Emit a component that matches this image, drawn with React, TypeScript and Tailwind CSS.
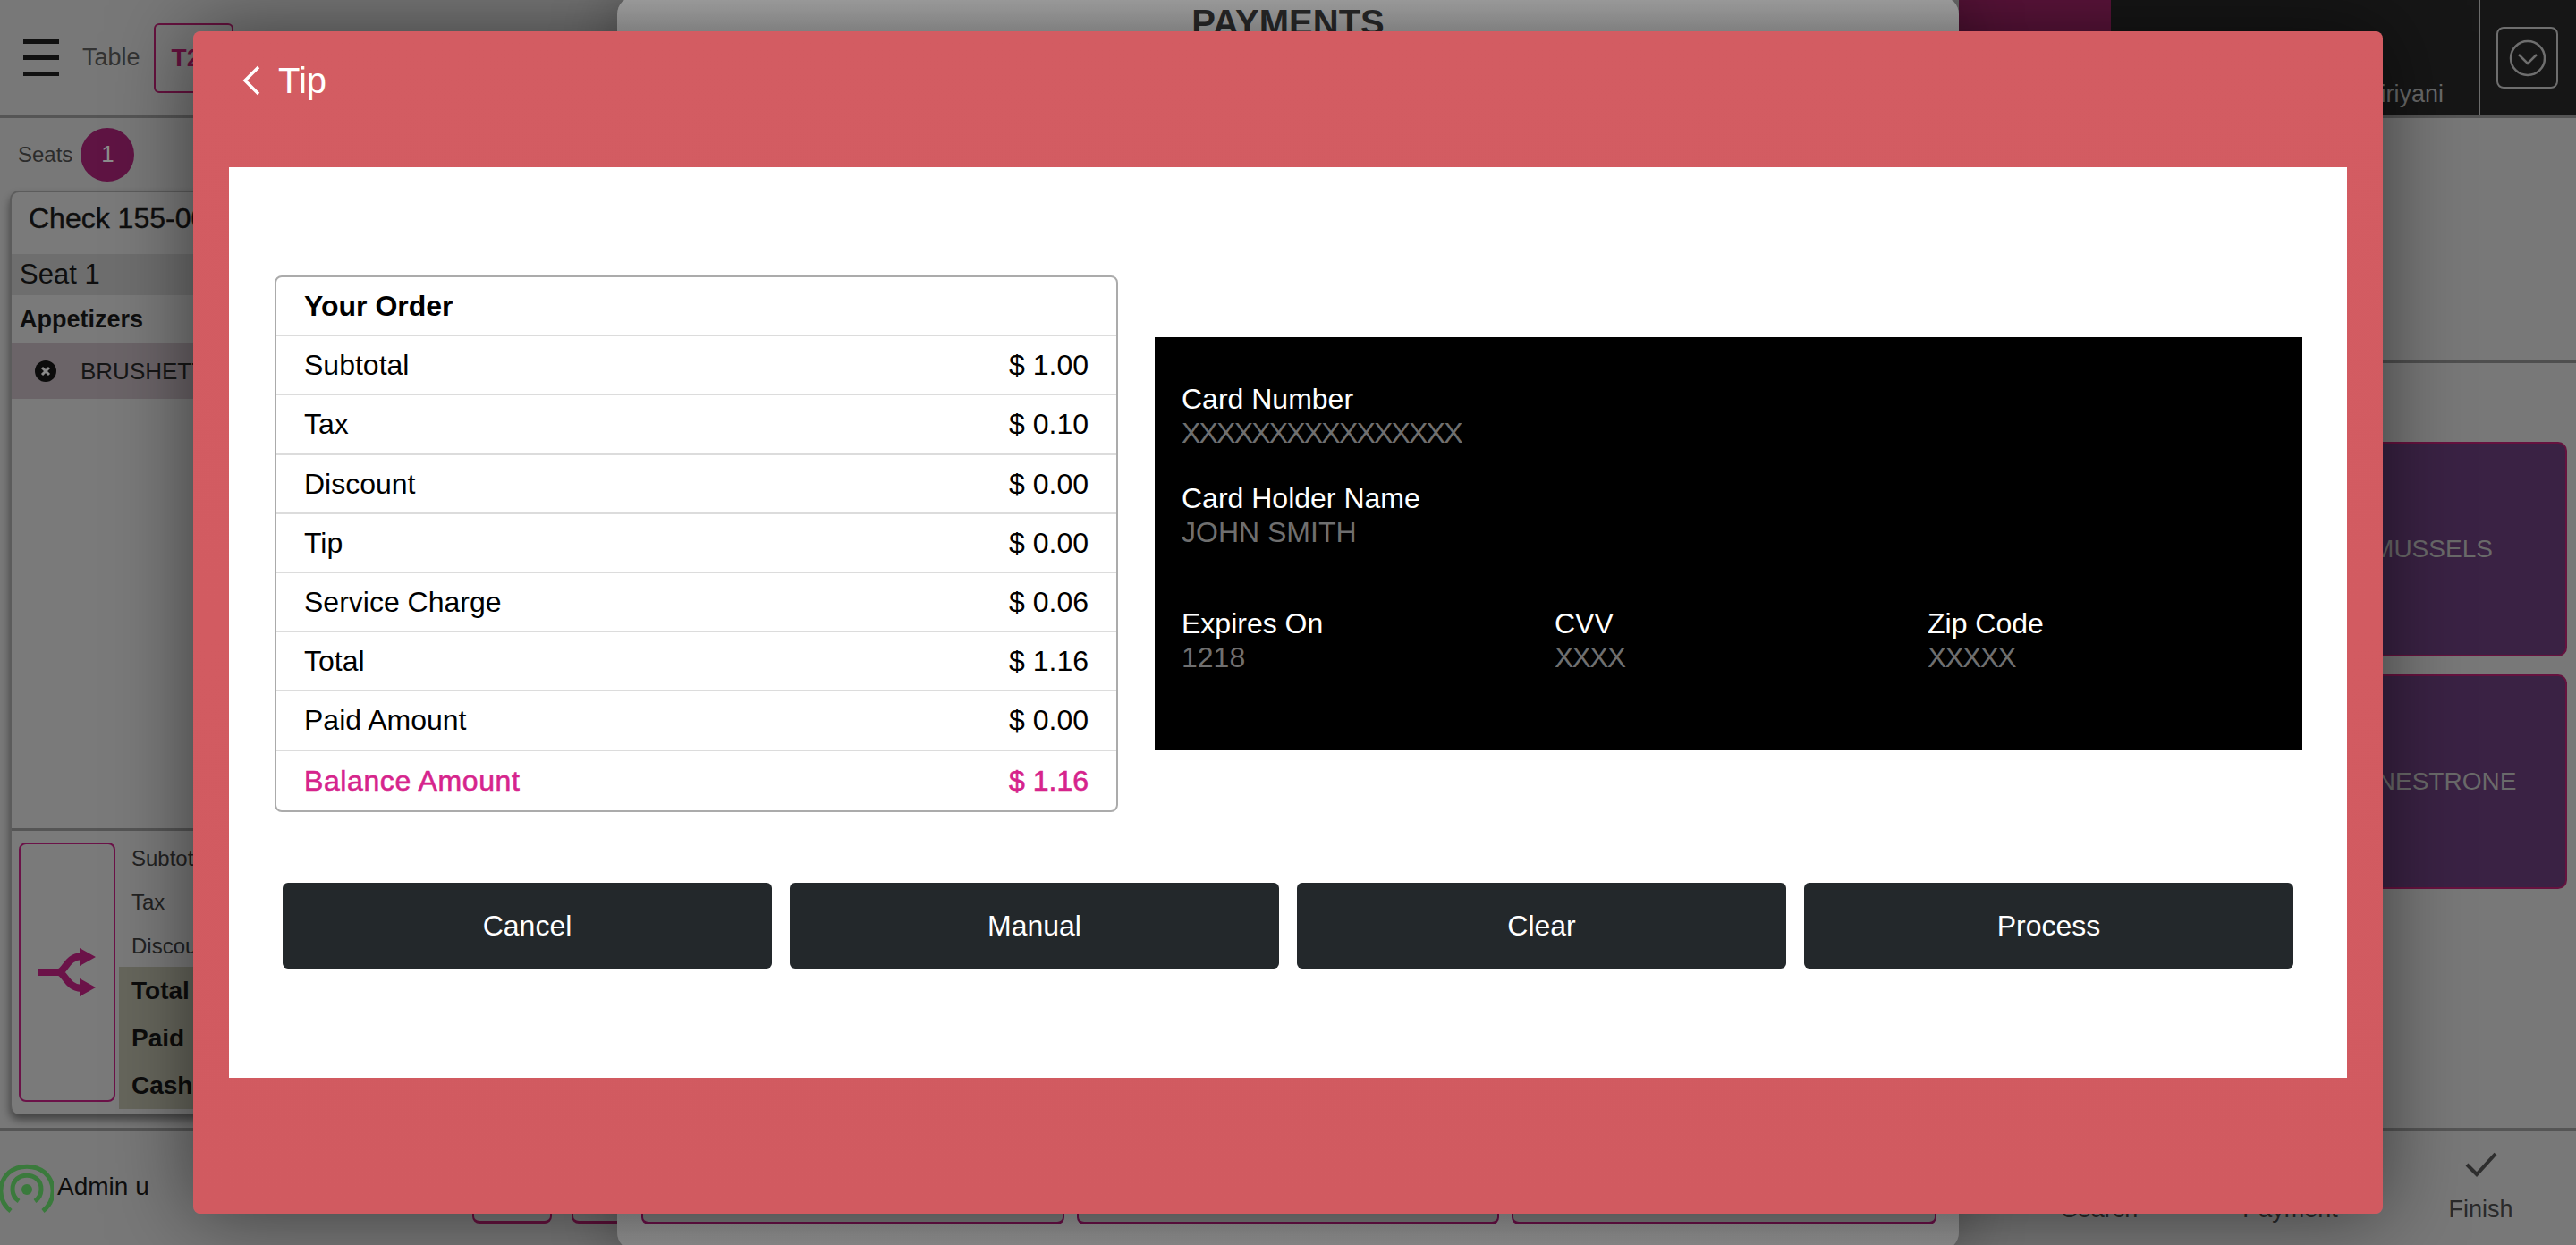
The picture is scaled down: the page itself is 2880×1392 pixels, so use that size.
import React from 'react';

const orderRows = [
  { label: 'Subtotal', value: '$ 1.00' },
  { label: 'Tax', value: '$ 0.10' },
  { label: 'Discount', value: '$ 0.00' },
  { label: 'Tip', value: '$ 0.00' },
  { label: 'Service Charge', value: '$ 0.06' },
  { label: 'Total', value: '$ 1.16' },
  { label: 'Paid Amount', value: '$ 0.00' },
];

const actions = ['Cancel', 'Manual', 'Clear', 'Process'];

const CardField: React.FC<{ label: string; value: string; tight?: boolean }> = ({ label, value, tight }) => (
  <div className="flex flex-col">
    <span className="h-[38px] leading-[38px] text-[32px] text-white">{label}</span>
    <span className={`h-[38px] leading-[38px] text-[32px] text-[#6f6f6f] ${tight ? 'tracking-[-1.8px]' : ''}`}>{value}</span>
  </div>
);

const Header: React.FC = () => (
  <header className="flex h-[132px] shrink-0 border-b-[3px] border-[#555555]">
    <div className="flex flex-1 items-center">
      <div className="ml-[26px] flex w-[40px] flex-col gap-[13px]">
        <span className="h-[5px] bg-[#111111]" />
        <span className="h-[5px] bg-[#111111]" />
        <span className="h-[5px] bg-[#111111]" />
      </div>
      <span className="ml-[26px] text-[27px] text-[#333333]">Table</span>
      <div className="ml-[15px] flex h-[78px] w-[89px] items-center rounded-[6px] border-2 border-[#66123f] pl-[18px] text-[28px] font-bold text-[#66123f]">
        T2
      </div>
    </div>
    <div className="w-[170px] bg-[#5c143b]" />
    <div className="flex w-[411px] items-end justify-end bg-[#161616] pb-[4px] pr-[39px] text-[27px] text-[#6a6a6a]">
      Biriyani
    </div>
    <div className="flex w-[109px] items-center border-l-2 border-[#6b6b6b] bg-[#161616] pl-[18px]">
      <div className="flex h-[69px] w-[69px] items-center justify-center rounded-[8px] border-2 border-[#6e6e6e]">
        <svg width="42" height="42" viewBox="0 0 42 42" fill="none" stroke="#6e6e6e" strokeWidth="2.5">
          <circle cx="21" cy="21" r="19" />
          <path d="M11 17l10 10 10-10" />
        </svg>
      </div>
    </div>
  </header>
);

const CheckPanel: React.FC = () => (
  <div className="flex w-[690px] shrink-0 flex-col">
    <div className="flex h-[81px] items-center pl-[20px]">
      <span className="text-[24px] text-[#2c2c2c]">Seats</span>
      <span className="ml-[9px] flex h-[60px] w-[60px] items-center justify-center rounded-full bg-[#5f1443] text-[26px] text-[#8c8c8c]">
        1
      </span>
    </div>
    <div className="ml-[11px] flex h-[1033px] flex-col rounded-[10px] border-l-2 border-t-2 border-[#5c5c5c] bg-[#7a7a7a] shadow-[0_6px_10px_rgba(0,0,0,0.45)]">
      <div className="flex h-[69px] items-center pb-[12px] pl-[19px] text-[32px] text-[#0e0e0e] [-webkit-text-stroke:0.4px_#0e0e0e]">
        Check 155-0001
      </div>
      <div className="flex h-[46px] items-center bg-[#6e6e6e] pl-[9px] text-[31px] text-[#0e0e0e]">Seat 1</div>
      <div className="flex h-[54px] items-center pl-[9px] text-[27px] font-bold text-[#0e0e0e]">Appetizers</div>
      <div className="flex h-[62px] items-center bg-[#6b6468] pl-[26px] text-[26px] text-[#161616]">
        <svg width="24" height="24" viewBox="0 0 24 24">
          <circle cx="12" cy="12" r="12" fill="#0c0c0c" />
          <path d="M8 8l8 8M16 8l-8 8" stroke="#8a8a8a" strokeWidth="3" />
        </svg>
        <span className="ml-[27px]">BRUSHETTA</span>
      </div>
      <div className="flex-1" />
      <div className="flex h-[320px] border-t-[3px] border-[#555555] pl-[8px]">
        <div className="mt-[13px] flex h-[290px] w-[108px] items-center justify-center rounded-[8px] border-2 border-[#6b1248]">
          <svg width="64" height="54" viewBox="0 0 64 54" fill="none">
            <path d="M0 27h22c8 0 9-17 26-18M22 27c8 0 9 17 26 18" stroke="#6b1248" strokeWidth="8" />
            <path d="M46 0l18 10-18 10zM46 34l18 10-18 10z" fill="#6b1248" />
          </svg>
        </div>
        <div className="ml-[4px] flex flex-1 flex-col">
          <div className="flex h-[152px] flex-col pl-[14px] pt-[6px] text-[24px] text-[#222222]">
            <span className="h-[49px] leading-[49px]">Subtotal</span>
            <span className="h-[49px] leading-[49px]">Tax</span>
            <span className="h-[49px] leading-[49px]">Discount</span>
          </div>
          <div className="flex h-[159px] flex-col bg-[#66665c] pl-[14px] text-[28px] font-bold text-[#0c0c0c]">
            <span className="h-[53px] leading-[53px]">Total</span>
            <span className="h-[53px] leading-[53px]">Paid</span>
            <span className="h-[53px] leading-[53px]">Cash</span>
          </div>
        </div>
      </div>
    </div>
  </div>
);

const MenuColumn: React.FC = () => (
  <div className="flex flex-1 flex-col">
    <div className="h-[274px] border-b-4 border-[#4f4f4f]" />
    <div className="flex flex-col items-end gap-[20px] pr-[10px] pt-[88px]">
      <div className="flex h-[240px] w-[300px] items-center justify-center rounded-[10px] border-2 border-[#66123f] bg-[#3a2244] text-[28px] text-[#6a6a6a]">
        MUSSELS
      </div>
      <div className="flex h-[240px] w-[300px] items-center justify-center rounded-[10px] border-2 border-[#66123f] bg-[#3a2244] text-[28px] text-[#6a6a6a]">
        MINESTRONE
      </div>
    </div>
  </div>
);

const Footer: React.FC = () => (
  <footer className="flex h-[131px] flex-1 border-t-[3px] border-[#555555]">
    <div className="flex w-[528px] items-center pb-[2px]">
      <svg width="60" height="56" viewBox="0 0 60 56" fill="none" stroke="#3a7a3c" strokeWidth="5" className="mt-[4px]">
        <path d="M12 53C-3 41-2 21 10 10c11-9 29-9 40 0 12 11 13 31-2 43" />
        <path d="M21 42c-9-6-9-19-2-25 6-5 16-5 22 0 7 6 7 19-2 25" />
        <circle cx="30" cy="29" r="6" fill="#3a7a3c" stroke="none" />
      </svg>
      <span className="ml-[4px] text-[28px] text-[#0e0e0e]">Admin u</span>
    </div>
    <div className="h-[104px] w-[89px] rounded-b-[8px] border-x-2 border-b-[3px] border-[#66123f]" />
    <div className="ml-[22px] h-[104px] w-[91px] rounded-b-[8px] border-x-2 border-b-[3px] border-[#66123f]" />
    <div className="flex flex-1 justify-end">
      {['Search', 'Payment'].map((tab) => (
        <div key={tab} className="flex w-[213px] flex-col items-center justify-end pb-[20px] text-[27px] text-[#2a2a2a]">
          {tab}
        </div>
      ))}
      <div className="flex w-[213px] flex-col items-center justify-end pb-[20px] text-[27px] text-[#2a2a2a]">
        <svg width="36" height="28" viewBox="0 0 36 28" fill="none" stroke="#2e2e2e" strokeWidth="4" className="mb-[16px]">
          <path d="M2 14l11 11L34 2" />
        </svg>
        Finish
      </div>
    </div>
  </footer>
);

const PaymentsSheet: React.FC = () => (
  <div className="absolute left-[690px] top-[-4px] flex h-[1402px] w-[1500px] flex-col justify-between rounded-[20px] bg-gradient-to-b from-[#ababab] to-[#939393] pb-[29px] shadow-[0_0_70px_rgba(0,0,0,0.35)]">
    <div className="pt-[2px] text-center text-[40px] font-bold leading-[54px] text-[#2a2a2a]">PAYMENTS</div>
    <div className="flex gap-[14px] pl-[27px]">
      <div className="h-[80px] w-[473px] rounded-b-[8px] border-x-2 border-b-[3px] border-[#6b1048] bg-[#7b7b7b]" />
      <div className="h-[80px] w-[472px] rounded-b-[8px] border-x-2 border-b-[3px] border-[#6b1048] bg-[#7b7b7b]" />
      <div className="h-[80px] w-[475px] rounded-b-[8px] border-x-2 border-b-[3px] border-[#6b1048] bg-[#7b7b7b]" />
    </div>
  </div>
);

const TipModal: React.FC = () => (
  <div className="absolute left-[216px] top-[35px] flex h-[1322px] w-[2448px] flex-col rounded-[8px] bg-gradient-to-b from-[#d35c62] to-[#d15a60] px-[40px] shadow-[0_0_90px_rgba(0,0,0,0.5)]">
    <div className="flex h-[152px] shrink-0 items-start pt-[29px] text-white">
      <svg width="24" height="36" viewBox="0 0 24 36" fill="none" stroke="white" strokeWidth="3.5" className="ml-[13px] mt-[8px]">
        <path d="M20 3L5 18l15 15" />
      </svg>
      <span className="ml-[18px] text-[40px] leading-[52px]">Tip</span>
    </div>
    <div className="flex h-[1018px] flex-col bg-white">
      <div className="flex items-start gap-[41px] pl-[51px] pr-[50px] pt-[121px]">
        <div className="w-[943px] shrink-0 overflow-hidden rounded-[8px] border-2 border-[#ababab] text-[32px] text-black">
          <div className="flex h-[66.2px] items-center border-b-2 border-[#dcdcdc] pl-[31px] pr-[31px] font-bold">Your Order</div>
          {orderRows.map((row) => (
            <div key={row.label} className="flex h-[66.2px] items-center justify-between border-b-2 border-[#dcdcdc] pl-[31px] pr-[31px]">
              <span>{row.label}</span>
              <span>{row.value}</span>
            </div>
          ))}
          <div className="flex h-[66.2px] items-center justify-between pl-[31px] pr-[31px] text-[#d6248c] [-webkit-text-stroke:0.6px_#d6248c]">
            <span className="tracking-[0.6px]">Balance Amount</span>
            <span>$ 1.16</span>
          </div>
        </div>
        <div className="mt-[69px] flex h-[462px] flex-1 flex-col bg-black pl-[30px] pt-[50px]">
          <CardField label="Card Number" value="XXXXXXXXXXXXXXXX" tight />
          <div className="mt-[35px]">
            <CardField label="Card Holder Name" value="JOHN SMITH" />
          </div>
          <div className="mt-[64px] grid grid-cols-[417px_417px_1fr]">
            <CardField label="Expires On" value="1218" />
            <CardField label="CVV" value="XXXX" tight />
            <CardField label="Zip Code" value="XXXXX" tight />
          </div>
        </div>
      </div>
      <div className="mt-[79px] flex gap-[20px] px-[60px]">
        {actions.map((action) => (
          <button key={action} className="flex h-[96px] flex-1 items-center justify-center rounded-[6px] bg-[#23282b] text-[32px] text-white">
            {action}
          </button>
        ))}
      </div>
    </div>
  </div>
);

export default function App() {
  return (
    <div className="relative flex h-[1392px] w-[2880px] flex-col overflow-hidden bg-[#787878] font-['Liberation_Sans',Arial,sans-serif]">
      <Header />
      <div className="flex h-[1129px] shrink-0">
        <CheckPanel />
        <MenuColumn />
      </div>
      <Footer />
      <PaymentsSheet />
      <TipModal />
    </div>
  );
}
